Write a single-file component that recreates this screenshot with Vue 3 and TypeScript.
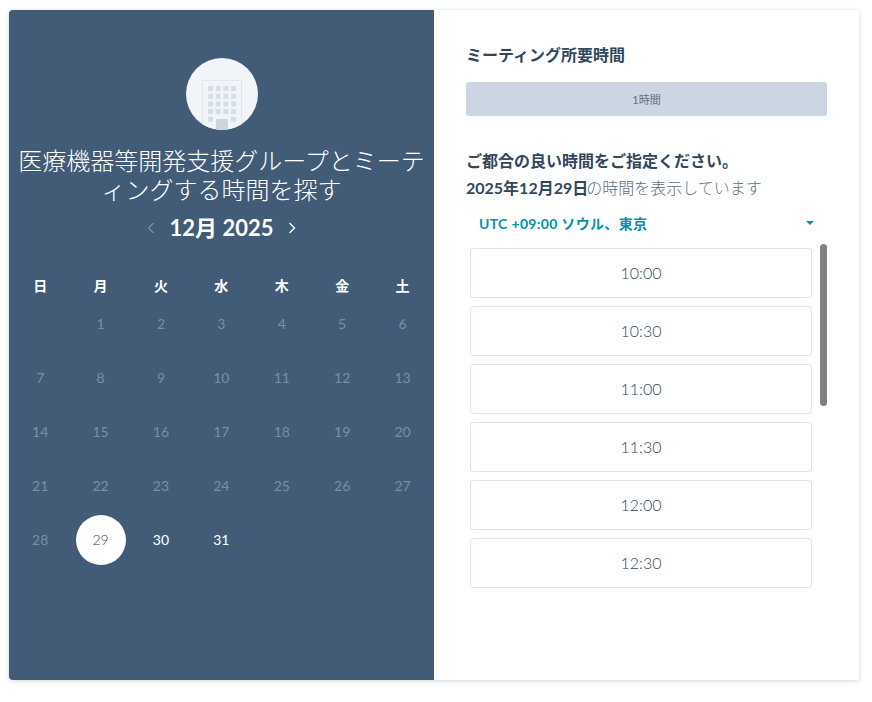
<template>
  <div class="page">
    <main class="card">
      <section class="left">
        <div class="avatar">
          <svg viewBox="0 0 72 72" width="72" height="72">
            <rect x="16.5" y="22.5" width="39" height="52" fill="#f1f5f9" stroke="#dfe6ee" />
            <rect
              v-for="w in windows"
              :key="`${w.x}-${w.y}`"
              :x="w.x"
              :y="w.y"
              width="5"
              height="5"
              rx="0.5"
              fill="#d3dee8"
            />
            <rect x="30" y="61" width="12" height="11" fill="#cbd6e2" />
          </svg>
        </div>
        <h1 class="title">医療機器等開発支援グループとミーティングする時間を探す</h1>
        <div class="month-nav">
          <svg class="chev dim" viewBox="0 0 8 12" width="8" height="12"><path d="M6.5 1 1.5 6l5 5" /></svg>
          <span class="month">12月 2025</span>
          <svg class="chev" viewBox="0 0 8 12" width="8" height="12"><path d="M1.5 1 6.5 6l-5 5" /></svg>
        </div>
        <div class="calendar">
          <div v-for="d in weekdays" :key="d" class="dow">{{ d }}</div>
          <div class="day" />
          <div
            v-for="n in 31"
            :key="n"
            class="day"
            :class="{ open: n >= 30 }"
          >
            <span v-if="n === 29" class="selected">{{ n }}</span>
            <template v-else>{{ n }}</template>
          </div>
        </div>
      </section>

      <section class="right">
        <h2 class="label">ミーティング所要時間</h2>
        <div class="duration">1時間</div>
        <h2 class="prompt">ご都合の良い時間をご指定ください。</h2>
        <p class="showing"><b>2025年12月29日</b>の時間を表示しています</p>
        <div class="tz">
          <span>UTC +09:00 ソウル、東京</span>
          <i class="caret" />
        </div>
        <div class="slots">
          <button v-for="s in slots" :key="s" class="slot">{{ s }}</button>
          <div class="thumb" />
        </div>
      </section>
    </main>
  </div>
</template>

<script setup lang="ts">
const weekdays = ['日', '月', '火', '水', '木', '金', '土']

const slots = ['10:00', '10:30', '11:00', '11:30', '12:00', '12:30']

const windows: { x: number; y: number }[] = []
for (let row = 0; row < 5; row++) {
  for (let col = 0; col < 4; col++) {
    if (row === 4 && (col === 1 || col === 2)) continue
    windows.push({ x: 22 + col * 7.7, y: 28 + row * 7.7 })
  }
}
</script>

<style scoped>
.page {
  padding: 10px 13px 22px 9px;
  font-family: Lato, "Noto Sans CJK JP", sans-serif;
  color: #33475b;
}

.card {
  display: flex;
  width: 850px;
  height: 670px;
  border-radius: 4px;
  overflow: hidden;
  box-shadow: 0 1px 5px rgba(45, 62, 80, 0.22);
}

.left {
  width: 425px;
  flex: none;
  background: #425b76;
  color: #fff;
  display: flex;
  flex-direction: column;
  align-items: center;
  padding-top: 48px;
}

.avatar {
  width: 72px;
  height: 72px;
  border-radius: 50%;
  background: #f1f5f9;
  overflow: hidden;
}
.avatar svg { display: block; }

.title {
  margin: 16px 0 0;
  width: 412px;
  font-size: 24px;
  line-height: 29px;
  font-weight: 300;
  text-align: center;
}

.month-nav {
  display: flex;
  align-items: center;
  gap: 15px;
  height: 28px;
  margin-top: 10px;
}
.month {
  font-size: 22px;
  line-height: 28px;
  font-weight: 700;
}
.chev {
  fill: none;
  stroke: #fff;
  stroke-width: 1.3;
}
.chev.dim { opacity: 0.3; }

.calendar {
  display: grid;
  grid-template-columns: repeat(7, 60.4px);
  grid-template-rows: 22px repeat(5, 54px);
  width: 423px;
  margin-top: 32px;
  align-items: center;
  justify-items: center;
}

.dow {
  font-size: 14px;
  font-weight: 700;
}

.day {
  font-size: 14px;
  color: rgba(255, 255, 255, 0.33);
}
.day.open {
  color: #fff;
  font-weight: 400;
}

.selected {
  display: flex;
  box-sizing: border-box;
  width: 50px;
  height: 50px;
  margin-top: 2px;
  padding-bottom: 2px;
  border-radius: 50%;
  background: #fff;
  color: #2d3e50;
  font-weight: 300;
  align-items: center;
  justify-content: center;
}

.right {
  flex: 1;
  background: #fff;
  padding: 34px 32px 0;
  display: flex;
  flex-direction: column;
  min-width: 0;
}

.label {
  margin: 0;
  font-size: 16px;
  line-height: 22px;
  font-weight: 700;
}

.duration {
  margin-top: 16px;
  height: 34px;
  line-height: 35px;
  background: #cbd6e2;
  border-radius: 3px;
  text-align: center;
  font-size: 11px;
  color: #5e7184;
}

.prompt {
  margin: 34px 0 0;
  font-size: 16px;
  line-height: 22px;
  font-weight: 700;
}

.showing {
  margin: 5px 0 0;
  font-size: 16px;
  line-height: 22px;
  font-weight: 300;
  color: #5c7086;
}
.showing b {
  font-weight: 700;
  color: #33475b;
  margin-right: -2px;
}

.tz {
  display: flex;
  align-items: center;
  justify-content: space-between;
  height: 24px;
  margin-top: 12px;
  padding: 0 13px;
  font-size: 14px;
  font-weight: 700;
  letter-spacing: 0.33px;
  color: #0091ae;
}

.caret {
  width: 0;
  height: 0;
  border-left: 4px solid transparent;
  border-right: 4px solid transparent;
  border-top: 4px solid #0091ae;
}

.slots {
  position: relative;
  margin-top: 9px;
  display: flex;
  flex-direction: column;
  gap: 8px;
  padding: 4px 15px 0 4px;
}

.thumb {
  position: absolute;
  top: 0;
  right: 0;
  width: 7px;
  height: 162px;
  background: #808080;
  border-radius: 4px;
}

.slot {
  flex: none;
  height: 50px;
  background: #fff;
  border: 1px solid #dfe3eb;
  border-radius: 3px;
  font-family: inherit;
  font-size: 16px;
  font-weight: 300;
  color: #33475b;
  padding: 0 0 1px;
}
</style>

<style>
html, body { background: #fff; }
</style>
